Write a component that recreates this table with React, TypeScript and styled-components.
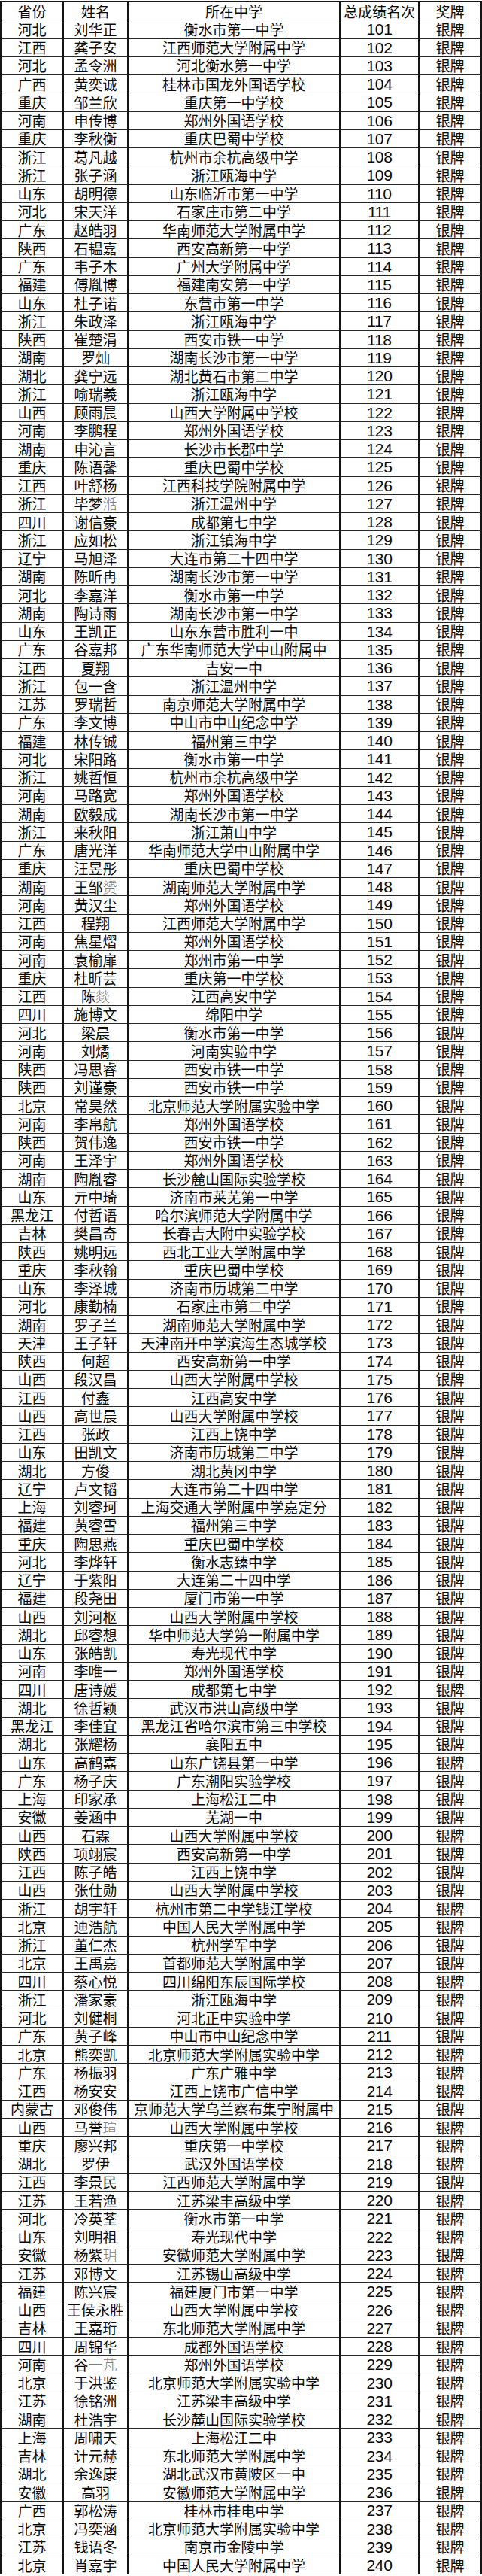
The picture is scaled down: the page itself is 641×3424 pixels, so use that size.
import React from "react";
import styled, { createGlobalStyle } from "styled-components";

const GlobalStyle = createGlobalStyle`
  html, body {
    margin: 0;
    padding: 0;
    background: #ffffff;
  }
  body {
    font-family: "Noto Sans CJK SC", "Noto Sans", sans-serif;
    color: #0a0a0a;
  }
`;

// 省份 | 姓名 | 所在中学 — rank starts at 101; [x] marks glyphs shown in fallback font
const rows = `河北|刘华正|衡水市第一中学
江西|龚子安|江西师范大学附属中学
河北|孟令洲|河北衡水第一中学
广西|黄奕诚|桂林市国龙外国语学校
重庆|邹兰欣|重庆第一中学校
河南|申传博|郑州外国语学校
重庆|李秋衡|重庆巴蜀中学校
浙江|葛凡越|杭州市余杭高级中学
浙江|张子涵|浙江瓯海中学
山东|胡明德|山东临沂市第一中学
河北|宋天洋|石家庄市第二中学
广东|赵皓羽|华南师范大学附属中学
陕西|石韫嘉|西安高新第一中学
广东|韦子木|广州大学附属中学
福建|傅胤博|福建南安第一中学
山东|杜子诺|东营市第一中学
浙江|朱政泽|浙江瓯海中学
陕西|崔楚涓|西安市铁一中学
湖南|罗灿|湖南长沙市第一中学
湖北|龚宁远|湖北黄石市第二中学
浙江|喻瑞羲|浙江瓯海中学
山西|顾雨晨|山西大学附属中学校
河南|李鹏程|郑州外国语学校
湖南|申沁言|长沙市长郡中学
重庆|陈语馨|重庆巴蜀中学校
江西|叶舒杨|江西科技学院附属中学
浙江|毕梦[湉]|浙江温州中学
四川|谢信豪|成都第七中学
浙江|应如松|浙江镇海中学
辽宁|马旭泽|大连市第二十四中学
湖南|陈昕冉|湖南长沙市第一中学
河北|李嘉洋|衡水市第一中学
湖南|陶诗雨|湖南长沙市第一中学
山东|王凯正|山东东营市胜利一中
广东|谷嘉邦|广东华南师范大学中山附属中
江西|夏翔|吉安一中
浙江|包一含|浙江温州中学
江苏|罗瑞哲|南京师范大学附属中学
广东|李文博|中山市中山纪念中学
福建|林传铖|福州第三中学
河北|宋阳路|衡水市第一中学
浙江|姚哲恒|杭州市余杭高级中学
河南|马路宽|郑州外国语学校
湖南|欧毅成|湖南长沙市第一中学
浙江|来秋阳|浙江萧山中学
广东|唐光洋|华南师范大学中山附属中学
重庆|汪昱彤|重庆巴蜀中学校
湖南|王邹[赟]|湖南师范大学附属中学
河南|黄汉尘|郑州外国语学校
江西|程翔|江西师范大学附属中学
河南|焦星熠|郑州外国语学校
河南|袁榆扉|郑州市第一中学
重庆|杜昕芸|重庆第一中学校
江西|陈[燚]|江西高安中学
四川|施博文|绵阳中学
河北|梁晨|衡水市第一中学
河南|刘燏|河南实验中学
陕西|冯思睿|西安市铁一中学
陕西|刘谨豪|西安市铁一中学
北京|常昊然|北京师范大学附属实验中学
河南|李帛航|郑州外国语学校
陕西|贺伟逸|西安市铁一中学
河南|王泽宇|郑州外国语学校
湖南|陶胤睿|长沙麓山国际实验学校
山东|亓中琦|济南市莱芜第一中学
黑龙江|付哲语|哈尔滨师范大学附属中学
吉林|樊昌奇|长春吉大附中实验学校
陕西|姚明远|西北工业大学附属中学
重庆|李秋翰|重庆巴蜀中学校
山东|李泽城|济南市历城第二中学
河北|康勤楠|石家庄市第二中学
湖南|罗子兰|湖南师范大学附属中学
天津|王子轩|天津南开中学滨海生态城学校
陕西|何超|西安高新第一中学
山西|段汉昌|山西大学附属中学校
江西|付鑫|江西高安中学
山西|高世晨|山西大学附属中学校
江西|张政|江西上饶中学
山东|田凯文|济南市历城第二中学
湖北|方俊|湖北黄冈中学
辽宁|卢文韬|大连市第二十四中学
上海|刘睿珂|上海交通大学附属中学嘉定分
福建|黄睿雪|福州第三中学
重庆|陶思燕|重庆巴蜀中学校
河北|李烨轩|衡水志臻中学
辽宁|于紫阳|大连第二十四中学
福建|段尧田|厦门市第一中学
山西|刘河枢|山西大学附属中学校
湖北|邱睿想|华中师范大学第一附属中学
山东|张皓凯|寿光现代中学
河南|李唯一|郑州外国语学校
四川|唐诗媛|成都第七中学
湖北|徐哲颖|武汉市洪山高级中学
黑龙江|李佳宜|黑龙江省哈尔滨市第三中学校
湖北|张耀杨|襄阳五中
山东|高鹤嘉|山东广饶县第一中学
广东|杨子庆|广东潮阳实验学校
上海|印家承|上海松江二中
安徽|姜涵中|芜湖一中
山西|石霖|山西大学附属中学校
陕西|项翊宸|西安高新第一中学
江西|陈子皓|江西上饶中学
山西|张仕勋|山西大学附属中学校
浙江|胡宇轩|杭州市第二中学钱江学校
北京|迪浩航|中国人民大学附属中学
浙江|董仁杰|杭州学军中学
北京|王禹嘉|首都师范大学附属中学
四川|蔡心悦|四川绵阳东辰国际学校
浙江|潘家豪|浙江瓯海中学
河北|刘健桐|河北正中实验中学
广东|黄子峰|中山市中山纪念中学
北京|熊奕凯|北京师范大学附属实验中学
广东|杨振羽|广东广雅中学
江西|杨安安|江西上饶市广信中学
内蒙古|邓俊伟|京师范大学乌兰察布集宁附属中
山西|马誉[瑄]|山西大学附属中学校
重庆|廖兴邦|重庆第一中学校
湖北|罗伊|武汉外国语学校
江西|李景民|江西师范大学附属中学
江苏|王若渔|江苏梁丰高级中学
河北|冷英荃|衡水市第一中学
山东|刘明祖|寿光现代中学
安徽|杨紫[玥]|安徽师范大学附属中学
江苏|邓博文|江苏锡山高级中学
福建|陈兴宸|福建厦门市第一中学
山西|王侯永胜|山西大学附属中学校
吉林|王嘉珩|东北师范大学附属中学
四川|周锦华|成都外国语学校
河南|谷一[芃]|郑州外国语学校
北京|于洪鉴|北京师范大学附属实验中学
江苏|徐铭洲|江苏梁丰高级中学
湖南|杜浩宇|长沙麓山国际实验学校
上海|周啸天|上海松江二中
吉林|计元赫|东北师范大学附属中学
湖北|余逸康|湖北武汉市黄陂区一中
安徽|高羽|安徽师范大学附属中学
广西|郭松涛|桂林市桂电中学
北京|冯奕涵|北京师范大学附属实验中学
江苏|钱语冬|南京市金陵中学
北京|肖嘉宇|中国人民大学附属中学`
  .split("\n")
  .map((line, i) => {
    const [province, name, school] = line.split("|");
    return { province, name, school, rank: 101 + i };
  });

const Sheet = styled.div`
  width: 641px;
  box-sizing: border-box;
  margin-top: 1px;
  border-top: 2px solid #151515;
  border-left: 2px solid #151515;
  background: #fff;
`;

const Row = styled.div`
  display: grid;
  grid-template-columns: 83px 86px 282px 105px 83px;
  height: 24.25px;
`;

const Cell = styled.div<{ $num?: boolean }>`
  box-sizing: border-box;
  display: flex;
  align-items: center;
  justify-content: center;
  border-right: 2px solid #151515;
  border-bottom: 1.5px solid #262626;
  white-space: nowrap;
  line-height: 20px;
  font-size: ${(p) => (p.$num ? "21px" : "19px")};
  font-family: ${(p) =>
    p.$num
      ? '"Liberation Sans", Arial, sans-serif'
      : '"Noto Sans CJK SC", "Noto Sans", sans-serif'};
  letter-spacing: ${(p) => (p.$num ? "-0.4px" : "0")};
  padding-top: ${(p) => (p.$num ? "1px" : "0")};
`;

const Fallback = styled.span`
  color: #7d7d7d;
  font-weight: 300;
`;

const renderName = (text: string) =>
  text.split(/(\[.+?\])/).map((part, i) =>
    part.startsWith("[") ? (
      <Fallback key={i}>{part.slice(1, -1)}</Fallback>
    ) : (
      <React.Fragment key={i}>{part}</React.Fragment>
    )
  );

export default function App() {
  return (
    <>
      <GlobalStyle />
      <Sheet>
        <Row>
          <Cell>省份</Cell>
          <Cell>姓名</Cell>
          <Cell>所在中学</Cell>
          <Cell>总成绩名次</Cell>
          <Cell>奖牌</Cell>
        </Row>
        {rows.map((r) => (
          <Row key={r.rank}>
            <Cell>{r.province}</Cell>
            <Cell>{renderName(r.name)}</Cell>
            <Cell>{r.school}</Cell>
            <Cell $num>{r.rank}</Cell>
            <Cell>银牌</Cell>
          </Row>
        ))}
      </Sheet>
    </>
  );
}
